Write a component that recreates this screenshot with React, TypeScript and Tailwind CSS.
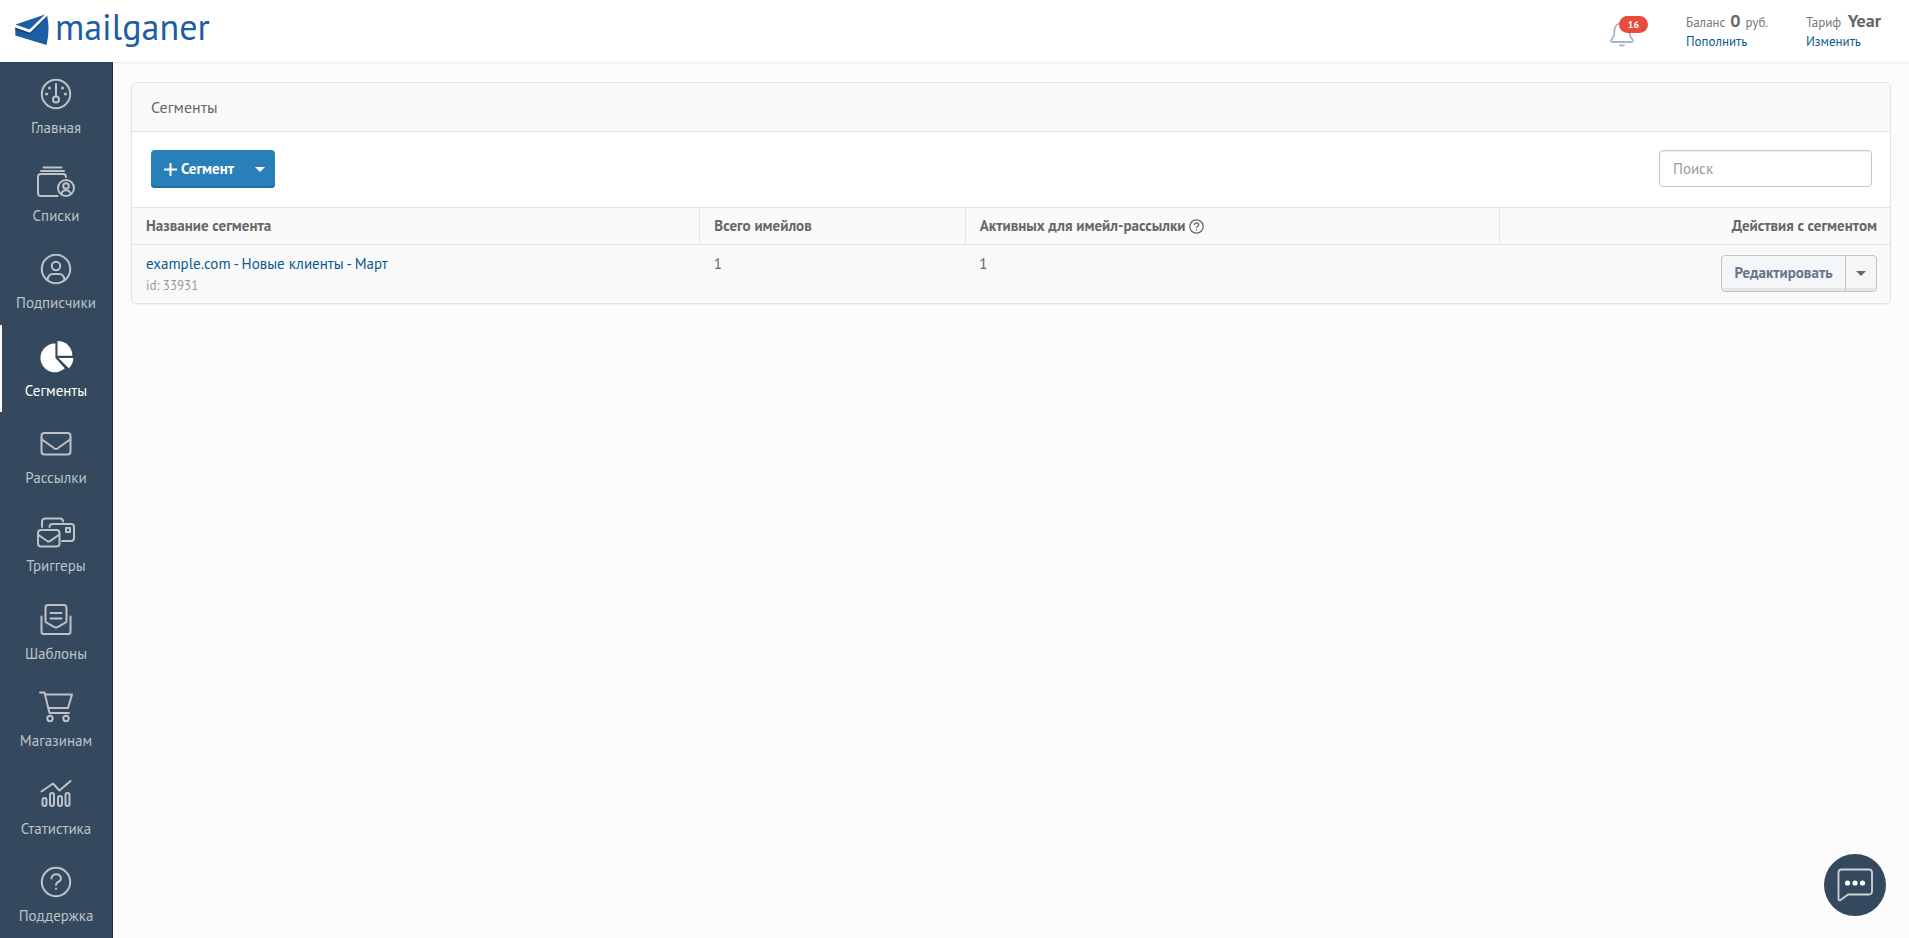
import React, { useState } from "react";
import clsx from "clsx";

const GaugeIcon = () => (
  <>
    <circle cx="20" cy="16" r="14.2" />
    <path d="M20 18V6" />
    <circle cx="20" cy="21.500" r="3" />
    <g fill="currentColor" stroke="none">
      <circle cx="13.500" cy="10" r="1.500" />
      <circle cx="26.500" cy="10" r="1.500" />
      <circle cx="10.500" cy="16" r="1.500" />
      <circle cx="29.500" cy="16" r="1.500" />
    </g>
  </>
);

const ListsIcon = () => (
  <>
    <path d="M7.500 1.500h18M5 5h23" />
    <path d="M21.500 30H5a3 3 0 0 1-3-3V11a3 3 0 0 1 3-3h22a3 3 0 0 1 3 3" />
    <circle cx="30" cy="22" r="8" />
    <circle cx="30" cy="20" r="2.800" />
    <path d="M25.500 28c0-5 9-5 9 0" />
  </>
);

const SubscriberIcon = () => (
  <>
    <circle cx="20" cy="16" r="14.200" />
    <circle cx="20" cy="13" r="4.200" />
    <path d="M11.500 27c.5-4.500 3-6 5.500-6h6c2.500 0 5 1.500 5.500 6" />
  </>
);

const PieIcon = () => (
  <g fill="currentColor" stroke="none">
    <path d="M19.400 2.500v14.500l9.400 10.300A14.400 14.400 0 1 1 19.400 2.500z" />
    <path d="M21.500 0a14.400 14.400 0 0 1 14.800 14.800H21.500z" />
    <path d="M22.500 17h14.800c0 4-1.500 7.500-4.500 10.300z" />
  </g>
);

const MailIcon = () => (
  <>
    <rect x="5.500" y="5" width="29" height="21.500" rx="3" />
    <path d="M6 11.500l12.500 9q1.500 1 3 0L34 11.500" />
  </>
);

const TriggersIcon = () => (
  <>
    <path d="M6 11V5.500a3 3 0 0 1 3-3h15a3 3 0 0 1 3 3" />
    <path d="M13.500 11a3 3 0 0 1 3-3H35a3 3 0 0 1 3 3v11a3 3 0 0 1-3 3H26" />
    <rect x="30" y="12" width="4" height="4" />
    <rect x="2" y="14" width="21.500" height="16.500" rx="3" />
    <path d="M2.500 19l9 6.200q1.200.8 2.400 0l9-6.200" />
  </>
);

const TemplatesIcon = () => (
  <>
    <path d="M9.500 17V3.500a2.500 2.500 0 0 1 2.500-2.500h16A2.500 2.500 0 0 1 30.500 3.500V17q0 1-1 1.600l-8 4.600q-1.500.8-3 0l-8-4.600q-1-.6-1-1.600z" />
    <path d="M14.500 9h11M14.500 14.500h11" />
    <path d="M5.500 12.500V28a2 2 0 0 0 2 2h25a2 2 0 0 0 2-2V12.500" />
  </>
);

const CartIcon = () => (
  <>
    <path d="M4 1.500h4.500L13.500 22H33" />
    <path d="M9.500 3.500H36L32 17H12.500" />
    <circle cx="14" cy="27.500" r="2.700" />
    <circle cx="30" cy="27.500" r="2.700" />
  </>
);

const StatsIcon = () => (
  <>
    <path d="M5.500 12.500L17 4.500l6.500 7L34.500 2" />
    <rect x="6.500" y="19" width="4" height="8" rx="2" />
    <rect x="14" y="14" width="4" height="13" rx="2" />
    <rect x="22" y="17" width="4" height="10" rx="2" />
    <rect x="29.500" y="14" width="4" height="13" rx="2" />
  </>
);

const SupportIcon = () => (
  <>
    <circle cx="20" cy="16" r="14.200" />
    <path d="M15.500 12.500c0-6 9.500-5.500 9.500 0 0 4-5 2.500-5 6.500M20 22.500v.5" />
  </>
);

const navItems = [
  { label: "Главная", icon: GaugeIcon },
  { label: "Списки", icon: ListsIcon },
  { label: "Подписчики", icon: SubscriberIcon },
  { label: "Сегменты", icon: PieIcon },
  { label: "Рассылки", icon: MailIcon },
  { label: "Триггеры", icon: TriggersIcon },
  { label: "Шаблоны", icon: TemplatesIcon },
  { label: "Магазинам", icon: CartIcon },
  { label: "Статистика", icon: StatsIcon },
  { label: "Поддержка", icon: SupportIcon },
];

const segments = [
  { id: 33931, name: "example.com - Новые клиенты - Март", total: 1, active: 1 },
];

function Caret() {
  return (
    <svg width="10" height="5" viewBox="0 0 10 5" fill="currentColor" aria-hidden="true">
      <path d="M0 0h10L5 5z" />
    </svg>
  );
}

function Header() {
  return (
    <header className="relative z-10 flex h-[62px] shrink-0 items-start justify-between bg-white pl-[15px] pr-7 shadow-[0_1px_3px_rgba(0,0,0,0.08)]">
      <a href="#" className="flex items-start text-[#1b5ea3]">
        <svg width="35" height="32" viewBox="0 0 35 32" className="mt-[14px]" aria-hidden="true">
          <path d="M.5 10.500L30 .5 14.500 15.500z" fill="#1b5ea3" />
          <path d="M.3 13l14.700 6.500L32.300 2.500q2.800 14-.8 28.500L.3 21.500z" fill="#1b5ea3" />
          <path d="M.3 13.500L15 18.500 32 1l.3 2.500L15 20.500.3 16z" fill="#174583" />
          <path d="M.3 11.500l14 5.200L31 .5l1 1.500L15 18.500.3 13.500z" fill="#fff" />
        </svg>
        <span className="ml-[5px] mt-[7px] text-[36px] leading-[40px]">mailganer</span>
      </a>

      <div className="flex gap-[38px] pt-[11px] text-[13px] text-[#777]">
        <button type="button" aria-label="Уведомления" className="relative mt-[9px] h-7 w-[38px]">
          <svg width="24" height="26" viewBox="0 0 24 26" fill="none" stroke="#a3b6c9" strokeWidth="1.800" aria-hidden="true">
            <path d="M12 2C7 2 4.500 5.500 4.500 10c0 5-1 6.500-3 8.500-.8 1-.3 2.500 1 2.500h19c1.300 0 1.800-1.500 1-2.500-2-2-3-3.500-3-8.500C19.500 5.500 17 2 12 2zM9.500 23.500c1 1.600 4 1.600 5 0" />
          </svg>
          <span className="absolute -top-1 right-0 flex h-[17px] w-[29px] items-center justify-center rounded-full bg-[#e74c3c] text-[10px] font-bold text-white">
            16
          </span>
        </button>
        <div className="w-[82px] whitespace-nowrap">
          <div className="flex h-[22px] items-baseline justify-between leading-5">
            Баланс <b className="text-lg leading-5 text-[#666]">0</b> руб.
          </div>
          <a href="#" className="block leading-[18px] text-[#095a8f]">Пополнить</a>
        </div>
        <div className="w-[75px] whitespace-nowrap">
          <div className="flex h-[22px] items-baseline justify-between leading-5">
            Тариф <b className="text-lg leading-5 text-[#666]">Year</b>
          </div>
          <a href="#" className="block leading-[18px] text-[#095a8f]">Изменить</a>
        </div>
      </div>
    </header>
  );
}

function Sidebar() {
  return (
    <nav className="flex w-[113px] shrink-0 flex-col border-r border-[#1c2f42] bg-[#34495e]">
      {navItems.map(({ label, icon: Icon }) => {
        const isActive = label === "Сегменты";
        return (
          <a
            key={label}
            href="#"
            className={clsx(
              "flex min-h-20 flex-1 flex-col items-center border-l-2 pr-[2px] pt-4",
              isActive ? "border-white text-white" : "border-transparent text-[#bdc3c7]"
            )}
          >
            <svg
              width="40"
              height="32"
              viewBox="0 0 40 32"
              fill="none"
              stroke="currentColor"
              strokeWidth="2"
              strokeLinecap="round"
              strokeLinejoin="round"
              className="overflow-visible"
              aria-hidden="true"
            >
              <Icon />
            </svg>
            <span className="mt-2 leading-5">{label}</span>
          </a>
        );
      })}
    </nav>
  );
}

export default function App() {
  const [search, setSearch] = useState("");

  return (
    <div className="flex min-h-screen flex-col bg-[#fcfcfc] font-['PT_Sans','Noto_Sans',sans-serif] text-[15px] text-[#676767]">
      <Header />
      <div className="flex flex-1">
        <Sidebar />

        <main className="min-w-0 flex-1 px-[18px] py-5">
          <section className="overflow-hidden rounded-[5px] border border-[#e1e4ea] bg-white shadow-[0_1px_2px_rgba(0,0,0,0.05)]">
            <h1 className="border-b border-[#e1e4ea] bg-[#fafafa] px-[19px] py-3 text-base leading-6">Сегменты</h1>

            <div className="flex items-start justify-between pb-[19px] pl-[19px] pr-[18px] pt-[18px]">
              <div className="flex h-[38px] overflow-hidden rounded-[4px] bg-[#2980b9] font-bold text-white shadow-[inset_0_-2px_0_#236d9d]">
                <button type="button" className="flex w-[94px] items-center gap-1 pl-[13px]">
                  <svg width="13" height="13" viewBox="0 0 13 13" stroke="currentColor" strokeWidth="2" aria-hidden="true">
                    <path d="M6.500 0v13M0 6.500h13" />
                  </svg>
                  Сегмент
                </button>
                <button type="button" aria-label="Ещё" className="flex w-[30px] items-center justify-center">
                  <Caret />
                </button>
              </div>
              <input
                type="text"
                aria-label="Поиск"
                placeholder="Поиск"
                value={search}
                onChange={(e) => setSearch(e.target.value)}
                className="h-[37px] w-[213px] rounded-[4px] border border-[#c4c6c9] bg-white px-[13px] shadow-[inset_0_1px_1px_rgba(0,0,0,0.08)] outline-none placeholder:text-[#999]"
              />
            </div>

            <table className="w-full table-fixed border-collapse">
              <thead>
                <tr className="h-[37px] border-y border-[#e1e4ea] bg-[#fafafa] text-left leading-5">
                  <th className="w-[32.3%] px-[14px]">Название сегмента</th>
                  <th className="w-[15.1%] border-l border-[#e1e4ea] px-[14px]">Всего имейлов</th>
                  <th className="w-[30.4%] border-l border-[#e1e4ea] px-[14px]">
                    <span className="flex items-center gap-1">
                      Активных для имейл-рассылки
                      <svg width="15" height="15" viewBox="0 0 15 15" fill="none" stroke="currentColor" strokeWidth="1.300" aria-hidden="true">
                        <circle cx="7.500" cy="7.500" r="6.700" />
                        <path d="M5.300 6c0-3 4.400-2.700 4.400 0 0 1.600-2.200 1.500-2.200 3M7.500 10.200v1.500" />
                      </svg>
                    </span>
                  </th>
                  <th className="border-l border-[#e1e4ea] pl-[14px] pr-[13px] text-right">Действия с сегментом</th>
                </tr>
              </thead>
              <tbody>
                {segments.map((segment) => (
                  <tr key={segment.id} className="bg-[#f9f9f9] align-top leading-[22px]">
                    <td className="px-[14px] pb-[6px] pt-2">
                      <a href="#" className="block text-[#095a8f]">{segment.name}</a>
                      <span className="block text-[13px] leading-[22px] text-[#999]">id: {segment.id}</span>
                    </td>
                    <td className="px-[14px] pt-2">{segment.total}</td>
                    <td className="px-[14px] pt-2">{segment.active}</td>
                    <td className="pl-[14px] pr-[13px] pt-[10px]">
                      <div className="ml-auto flex h-[37px] w-[156px] overflow-hidden rounded-[4px] border border-[#c1c5ca] bg-[#f4f6f8] font-bold shadow-[inset_0_-3px_0_#e6e6e6]">
                        <button type="button" className="flex-1 pb-px text-[#65758a]">Редактировать</button>
                        <button type="button" aria-label="Действия" className="flex w-[31px] items-center justify-center border-l border-[#c1c5ca]">
                          <Caret />
                        </button>
                      </div>
                    </td>
                  </tr>
                ))}
              </tbody>
            </table>
          </section>
        </main>
      </div>

      <button
        type="button"
        aria-label="Чат"
        className="fixed bottom-[22px] right-[23px] flex size-[62px] items-center justify-center rounded-full bg-[#34495e]"
      >
        <svg width="36" height="34" viewBox="0 0 36 34" fill="none" aria-hidden="true">
          <path
            d="M4 1.500h28a3 3 0 0 1 3 3v19a3 3 0 0 1-3 3H11L3.500 32c-1.200.8-2 .3-2-1V4.500a3 3 0 0 1 2.500-3z"
            stroke="#ced3da"
            strokeWidth="1.800"
            strokeLinejoin="round"
          />
          <g fill="#fff">
            <circle cx="10.500" cy="15" r="2.600" />
            <circle cx="18" cy="15" r="2.600" />
            <circle cx="25.500" cy="15" r="2.600" />
          </g>
        </svg>
      </button>
    </div>
  );
}
